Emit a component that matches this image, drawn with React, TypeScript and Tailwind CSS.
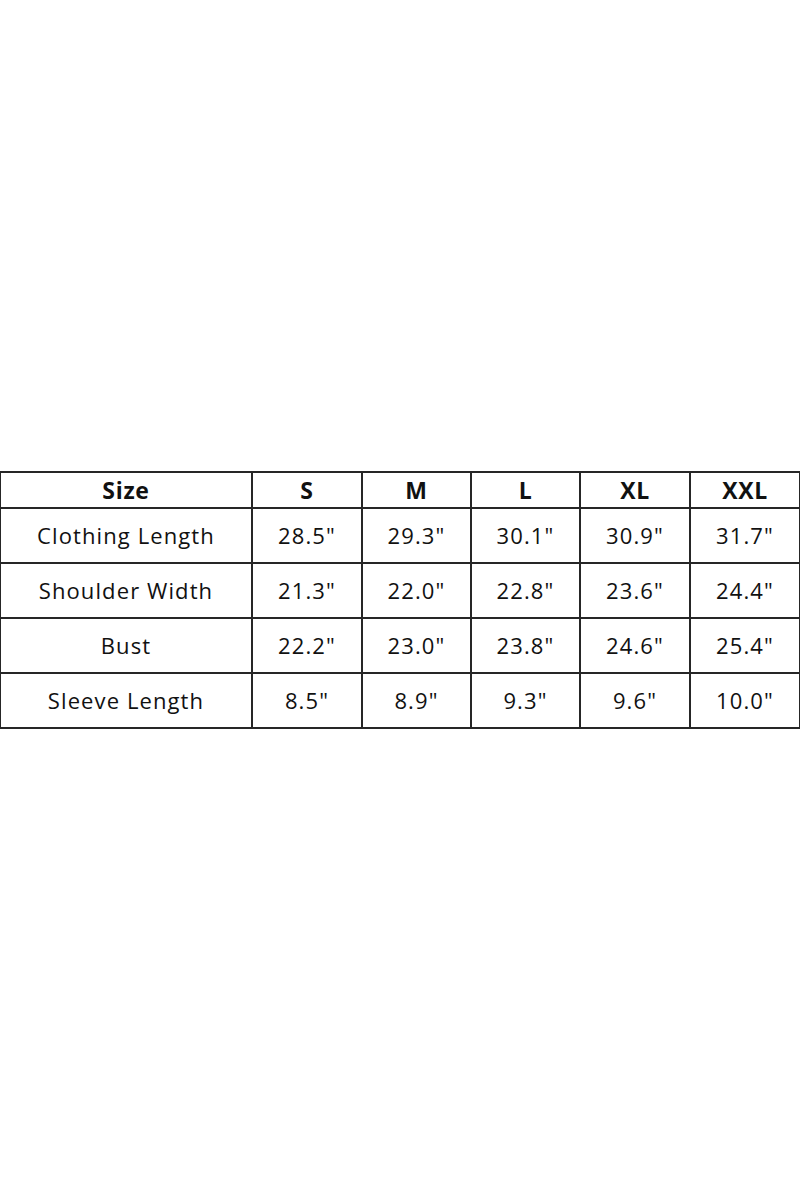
const sizes = ['S', 'M', 'L', 'XL', 'XXL']

const rows = [
  { label: 'Clothing Length', values: ['28.5"', '29.3"', '30.1"', '30.9"', '31.7"'] },
  { label: 'Shoulder Width', values: ['21.3"', '22.0"', '22.8"', '23.6"', '24.4"'] },
  { label: 'Bust', values: ['22.2"', '23.0"', '23.8"', '24.6"', '25.4"'] },
  { label: 'Sleeve Length', values: ['8.5"', '8.9"', '9.3"', '9.6"', '10.0"'] },
]

const cell = 'border-2 border-[#262626] text-center align-middle'

export default function App() {
  return (
    <div className="flex h-[1200px] w-[800px] items-center justify-center bg-white font-['Open_Sans',sans-serif] text-[#111]">
      <table className="w-[800px] table-fixed border-collapse">
        <colgroup>
          <col className="w-[252px]" />
          <col className="w-[110px]" />
          <col className="w-[109px]" />
          <col className="w-[109px]" />
          <col className="w-[110px]" />
          <col className="w-[110px]" />
        </colgroup>
        <thead>
          <tr className="h-[36px]">
            <th className={`${cell} text-[23px] font-bold tracking-[0.03em]`}>Size</th>
            {sizes.map((s) => (
              <th key={s} className={`${cell} text-[23px] font-bold tracking-[0.03em]`}>
                {s}
              </th>
            ))}
          </tr>
        </thead>
        <tbody>
          {rows.map((r) => (
            <tr key={r.label} className="h-[55px]">
              <td className={`${cell} text-[22px] tracking-[0.05em]`}>{r.label}</td>
              {r.values.map((v, i) => (
                <td key={i} className={`${cell} text-[22px] tracking-[0.05em]`}>
                  {v}
                </td>
              ))}
            </tr>
          ))}
        </tbody>
      </table>
    </div>
  )
}
